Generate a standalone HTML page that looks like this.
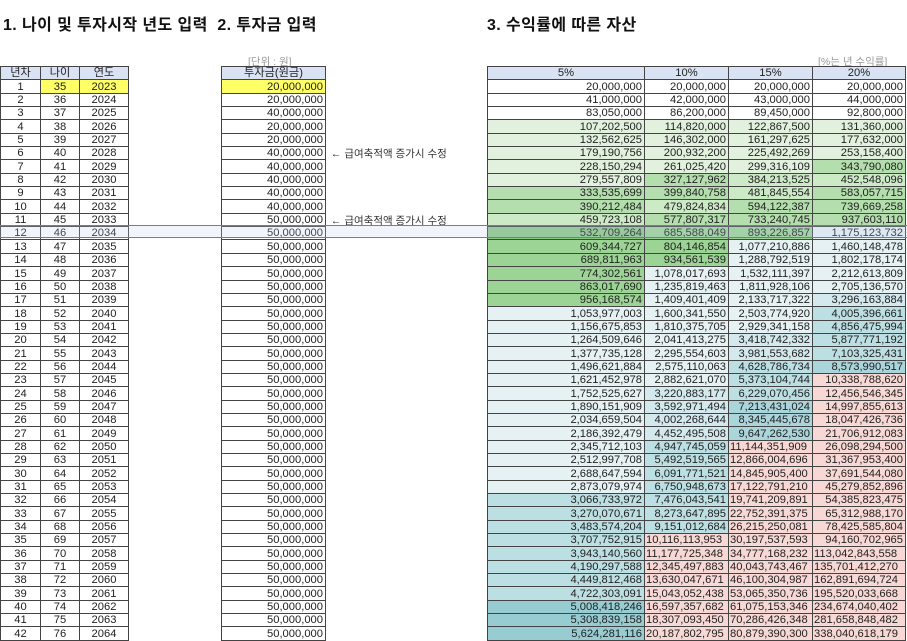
<!DOCTYPE html>
<html><head><meta charset="utf-8"><style>
*{margin:0;padding:0;box-sizing:border-box}
body{width:907px;height:641px;background:#fff;position:relative;overflow:hidden;font-family:"Liberation Sans","Noto Sans CJK KR",sans-serif;color:#222}
.t{position:absolute;top:11px;font-size:16px;font-weight:bold;color:#111;letter-spacing:0.4px}
.n{position:absolute;font-size:10.5px;color:#999}
table{position:absolute;left:0;top:66px;width:905px;border-collapse:collapse;table-layout:fixed;font-size:11.2px}
tr{height:13.35px}
td{padding:0 2px;line-height:11px;white-space:nowrap;overflow:hidden;vertical-align:bottom;text-align:right}
tr td:nth-child(1),tr td:nth-child(2),tr td:nth-child(3){border:1px solid #444;text-align:center}
tr td:nth-child(5),tr td:nth-child(7),tr td:nth-child(8),tr td:nth-child(9),tr td:nth-child(10){border:1px solid #444}
tr td:nth-child(6),tr td:nth-child(4){border:none;text-align:left;color:#333;font-size:10.5px}
.h td{background:#dae3f3;text-align:center!important}
.h td.x{border:none;background:none}
.y{background:#ffff66}
.o{text-align:left;padding-left:1px}
.g1{background:#e2f1de}.g2{background:#cdeac7}.g3{background:#b4dead}.g4{background:#9bd494}.g5{background:#8bc983}
.b1{background:#e5f1f3}.b2{background:#d3e9ed}.b3{background:#bcdfe3}.b4{background:#a9d5db}.b5{background:#98ccd3}
.r{background:#f8d8d4}
.hl{position:absolute;left:0;top:225px;width:907px;height:13px;background:rgba(190,205,245,0.22);border-top:1px solid #5b7fd0;border-bottom:1px solid #5b7fd0}
</style></head><body>
<div class="t" style="left:3px">1. 나이 및 투자시작 년도 입력&nbsp; 2. 투자금 입력</div>
<div class="t" style="left:487px">3. 수익률에 따른 자산</div>
<div class="n" style="left:248px;top:54px">[단위 : 원]</div>
<div class="n" style="left:818px;top:54px">[%는 년 수익률]</div>
<table>
<colgroup><col style="width:40px"><col style="width:39px"><col style="width:49px"><col style="width:93px"><col style="width:104px"><col style="width:162px"><col style="width:157px"><col style="width:84px"><col style="width:84px"><col style="width:93px"></colgroup>
<tr class="h"><td>년차</td><td>나이</td><td>연도</td><td class="x"></td><td>투자금(원금)</td><td class="x"></td><td>5%</td><td>10%</td><td>15%</td><td>20%</td></tr>
<tr><td>1</td><td class="y">35</td><td class="y">2023</td><td></td><td class="y">20,000,000</td><td></td><td>20,000,000</td><td>20,000,000</td><td>20,000,000</td><td>20,000,000</td></tr>
<tr><td>2</td><td>36</td><td>2024</td><td></td><td>20,000,000</td><td></td><td>41,000,000</td><td>42,000,000</td><td>43,000,000</td><td>44,000,000</td></tr>
<tr><td>3</td><td>37</td><td>2025</td><td></td><td>40,000,000</td><td></td><td>83,050,000</td><td>86,200,000</td><td>89,450,000</td><td>92,800,000</td></tr>
<tr><td>4</td><td>38</td><td>2026</td><td></td><td>20,000,000</td><td></td><td class="g1">107,202,500</td><td class="g1">114,820,000</td><td class="g1">122,867,500</td><td class="g1">131,360,000</td></tr>
<tr><td>5</td><td>39</td><td>2027</td><td></td><td>20,000,000</td><td></td><td class="g1">132,562,625</td><td class="g1">146,302,000</td><td class="g1">161,297,625</td><td class="g1">177,632,000</td></tr>
<tr><td>6</td><td>40</td><td>2028</td><td></td><td>40,000,000</td><td>&nbsp;← 급여축적액 증가시 수정</td><td class="g1">179,190,756</td><td class="g1">200,932,200</td><td class="g1">225,492,269</td><td class="g1">253,158,400</td></tr>
<tr><td>7</td><td>41</td><td>2029</td><td></td><td>40,000,000</td><td></td><td class="g1">228,150,294</td><td class="g1">261,025,420</td><td class="g1">299,316,109</td><td class="g3">343,790,080</td></tr>
<tr><td>8</td><td>42</td><td>2030</td><td></td><td>40,000,000</td><td></td><td class="g1">279,557,809</td><td class="g3">327,127,962</td><td class="g2">384,213,525</td><td class="g2">452,548,096</td></tr>
<tr><td>9</td><td>43</td><td>2031</td><td></td><td>40,000,000</td><td></td><td class="g3">333,535,699</td><td class="g3">399,840,758</td><td class="g2">481,845,554</td><td class="g3">583,057,715</td></tr>
<tr><td>10</td><td>44</td><td>2032</td><td></td><td>40,000,000</td><td></td><td class="g3">390,212,484</td><td class="g2">479,824,834</td><td class="g3">594,122,387</td><td class="g3">739,669,258</td></tr>
<tr><td>11</td><td>45</td><td>2033</td><td></td><td>50,000,000</td><td>&nbsp;← 급여축적액 증가시 수정</td><td class="g2">459,723,108</td><td class="g3">577,807,317</td><td class="g3">733,240,745</td><td class="g3">937,603,110</td></tr>
<tr><td>12</td><td>46</td><td>2034</td><td></td><td>50,000,000</td><td></td><td class="g5">532,709,264</td><td class="g4">685,588,049</td><td class="g4">893,226,857</td><td class="b1">1,175,123,732</td></tr>
<tr><td>13</td><td>47</td><td>2035</td><td></td><td>50,000,000</td><td></td><td class="g4">609,344,727</td><td class="g4">804,146,854</td><td class="b1">1,077,210,886</td><td class="b1">1,460,148,478</td></tr>
<tr><td>14</td><td>48</td><td>2036</td><td></td><td>50,000,000</td><td></td><td class="g4">689,811,963</td><td class="g4">934,561,539</td><td class="b1">1,288,792,519</td><td class="b1">1,802,178,174</td></tr>
<tr><td>15</td><td>49</td><td>2037</td><td></td><td>50,000,000</td><td></td><td class="g4">774,302,561</td><td class="b1">1,078,017,693</td><td class="b1">1,532,111,397</td><td class="b1">2,212,613,809</td></tr>
<tr><td>16</td><td>50</td><td>2038</td><td></td><td>50,000,000</td><td></td><td class="g4">863,017,690</td><td class="b1">1,235,819,463</td><td class="b1">1,811,928,106</td><td class="b1">2,705,136,570</td></tr>
<tr><td>17</td><td>51</td><td>2039</td><td></td><td>50,000,000</td><td></td><td class="g4">956,168,574</td><td class="b1">1,409,401,409</td><td class="b1">2,133,717,322</td><td class="b2">3,296,163,884</td></tr>
<tr><td>18</td><td>52</td><td>2040</td><td></td><td>50,000,000</td><td></td><td class="b1">1,053,977,003</td><td class="b1">1,600,341,550</td><td class="b1">2,503,774,920</td><td class="b3">4,005,396,661</td></tr>
<tr><td>19</td><td>53</td><td>2041</td><td></td><td>50,000,000</td><td></td><td class="b1">1,156,675,853</td><td class="b1">1,810,375,705</td><td class="b1">2,929,341,158</td><td class="b3">4,856,475,994</td></tr>
<tr><td>20</td><td>54</td><td>2042</td><td></td><td>50,000,000</td><td></td><td class="b1">1,264,509,646</td><td class="b1">2,041,413,275</td><td class="b2">3,418,742,332</td><td class="b3">5,877,771,192</td></tr>
<tr><td>21</td><td>55</td><td>2043</td><td></td><td>50,000,000</td><td></td><td class="b1">1,377,735,128</td><td class="b1">2,295,554,603</td><td class="b2">3,981,553,682</td><td class="b3">7,103,325,431</td></tr>
<tr><td>22</td><td>56</td><td>2044</td><td></td><td>50,000,000</td><td></td><td class="b1">1,496,621,884</td><td class="b1">2,575,110,063</td><td class="b3">4,628,786,734</td><td class="b4">8,573,990,517</td></tr>
<tr><td>23</td><td>57</td><td>2045</td><td></td><td>50,000,000</td><td></td><td class="b1">1,621,452,978</td><td class="b1">2,882,621,070</td><td class="b3">5,373,104,744</td><td class="r">10,338,788,620</td></tr>
<tr><td>24</td><td>58</td><td>2046</td><td></td><td>50,000,000</td><td></td><td class="b1">1,752,525,627</td><td class="b2">3,220,883,177</td><td class="b3">6,229,070,456</td><td class="r">12,456,546,345</td></tr>
<tr><td>25</td><td>59</td><td>2047</td><td></td><td>50,000,000</td><td></td><td class="b1">1,890,151,909</td><td class="b2">3,592,971,494</td><td class="b4">7,213,431,024</td><td class="r">14,997,855,613</td></tr>
<tr><td>26</td><td>60</td><td>2048</td><td></td><td>50,000,000</td><td></td><td class="b1">2,034,659,504</td><td class="b2">4,002,268,644</td><td class="b4">8,345,445,678</td><td class="r">18,047,426,736</td></tr>
<tr><td>27</td><td>61</td><td>2049</td><td></td><td>50,000,000</td><td></td><td class="b1">2,186,392,479</td><td class="b2">4,452,495,508</td><td class="b4">9,647,262,530</td><td class="r">21,706,912,083</td></tr>
<tr><td>28</td><td>62</td><td>2050</td><td></td><td>50,000,000</td><td></td><td class="b1">2,345,712,103</td><td class="b3">4,947,745,059</td><td class="r o">11,144,351,909</td><td class="r">26,098,294,500</td></tr>
<tr><td>29</td><td>63</td><td>2051</td><td></td><td>50,000,000</td><td></td><td class="b1">2,512,997,708</td><td class="b3">5,492,519,565</td><td class="r o">12,866,004,696</td><td class="r">31,367,953,400</td></tr>
<tr><td>30</td><td>64</td><td>2052</td><td></td><td>50,000,000</td><td></td><td class="b1">2,688,647,594</td><td class="b3">6,091,771,521</td><td class="r o">14,845,905,400</td><td class="r">37,691,544,080</td></tr>
<tr><td>31</td><td>65</td><td>2053</td><td></td><td>50,000,000</td><td></td><td class="b1">2,873,079,974</td><td class="b3">6,750,948,673</td><td class="r o">17,122,791,210</td><td class="r">45,279,852,896</td></tr>
<tr><td>32</td><td>66</td><td>2054</td><td></td><td>50,000,000</td><td></td><td class="b3">3,066,733,972</td><td class="b3">7,476,043,541</td><td class="r o">19,741,209,891</td><td class="r">54,385,823,475</td></tr>
<tr><td>33</td><td>67</td><td>2055</td><td></td><td>50,000,000</td><td></td><td class="b3">3,270,070,671</td><td class="b3">8,273,647,895</td><td class="r o">22,752,391,375</td><td class="r">65,312,988,170</td></tr>
<tr><td>34</td><td>68</td><td>2056</td><td></td><td>50,000,000</td><td></td><td class="b3">3,483,574,204</td><td class="b3">9,151,012,684</td><td class="r o">26,215,250,081</td><td class="r">78,425,585,804</td></tr>
<tr><td>35</td><td>69</td><td>2057</td><td></td><td>50,000,000</td><td></td><td class="b3">3,707,752,915</td><td class="r o">10,116,113,953</td><td class="r o">30,197,537,593</td><td class="r">94,160,702,965</td></tr>
<tr><td>36</td><td>70</td><td>2058</td><td></td><td>50,000,000</td><td></td><td class="b3">3,943,140,560</td><td class="r o">11,177,725,348</td><td class="r o">34,777,168,232</td><td class="r o">113,042,843,558</td></tr>
<tr><td>37</td><td>71</td><td>2059</td><td></td><td>50,000,000</td><td></td><td class="b3">4,190,297,588</td><td class="r o">12,345,497,883</td><td class="r o">40,043,743,467</td><td class="r o">135,701,412,270</td></tr>
<tr><td>38</td><td>72</td><td>2060</td><td></td><td>50,000,000</td><td></td><td class="b3">4,449,812,468</td><td class="r o">13,630,047,671</td><td class="r o">46,100,304,987</td><td class="r o">162,891,694,724</td></tr>
<tr><td>39</td><td>73</td><td>2061</td><td></td><td>50,000,000</td><td></td><td class="b3">4,722,303,091</td><td class="r o">15,043,052,438</td><td class="r o">53,065,350,736</td><td class="r o">195,520,033,668</td></tr>
<tr><td>40</td><td>74</td><td>2062</td><td></td><td>50,000,000</td><td></td><td class="b5">5,008,418,246</td><td class="r o">16,597,357,682</td><td class="r o">61,075,153,346</td><td class="r o">234,674,040,402</td></tr>
<tr><td>41</td><td>75</td><td>2063</td><td></td><td>50,000,000</td><td></td><td class="b5">5,308,839,158</td><td class="r o">18,307,093,450</td><td class="r o">70,286,426,348</td><td class="r o">281,658,848,482</td></tr>
<tr><td>42</td><td>76</td><td>2064</td><td></td><td>50,000,000</td><td></td><td class="b5">5,624,281,116</td><td class="r o">20,187,802,795</td><td class="r o">80,879,390,300</td><td class="r o">338,040,618,179</td></tr>
</table>
<div class="hl"></div>
</body></html>
